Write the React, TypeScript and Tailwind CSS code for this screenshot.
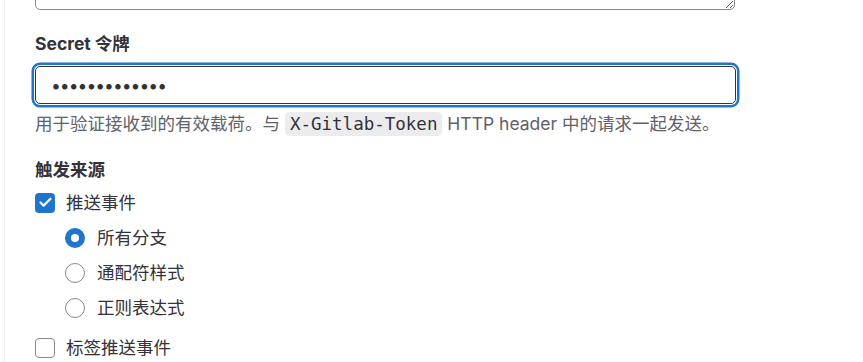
import { Check } from "lucide-react";

const sans = "font-['Inter','Noto_Sans_CJK_SC',sans-serif]";

export default function App() {
  return (
    <div className={`h-[362px] w-full overflow-hidden bg-white text-[17.5px] leading-[25px] text-[#333238] ${sans}`}>
      <div className="ml-[4px] h-full border-l border-[#ececef] pl-[30px]">
        <div className="w-[701px]">
          {/* tail of the description textarea above */}
          <div className="flex h-[10px] flex-col justify-end overflow-hidden">
            <textarea
              readOnly
              className="h-[60px] w-[700px] shrink-0 rounded-[5px] border border-[#89888d] bg-white outline-none"
            />
          </div>

          <label className="mt-[21px] block font-bold">Secret 令牌</label>
          <input
            type="password"
            readOnly
            defaultValue="abcdefghijklm"
            className="mt-[10px] block h-[38px] w-[701px] rounded-[5px] border border-[#333238] bg-white px-[15px] text-[17.5px] tracking-[-1px] text-[#333238] shadow-[0_0_0_1px_#fff,0_0_0_3.5px_#1f75cb] outline-none"
          />
          <p className="mt-[7px] text-[#626168]">
            用于验证接收到的有效载荷。与{" "}
            <code className="rounded-[5px] bg-[#ececef] px-[5px] py-[2px] font-['DejaVu_Sans_Mono',monospace] text-[17.5px] text-[#333238]">
              X-Gitlab-Token
            </code>{" "}
            HTTP header 中的请求一起发送。
          </p>

          <div className="mt-[20px] font-bold">触发来源</div>
          <div className="mt-[8px] flex flex-col">
            <CheckRow checked label="推送事件" />
            <div className="mt-[10px] flex flex-col gap-[10px] pl-[30px]">
              <RadioRow checked label="所有分支" />
              <RadioRow label="通配符样式" />
              <RadioRow label="正则表达式" />
            </div>
            <div className="mt-[15px]">
              <CheckRow label="标签推送事件" />
            </div>
          </div>
        </div>
      </div>
    </div>
  );
}

function CheckRow({ checked, label }: { checked?: boolean; label: string }) {
  return (
    <div className="flex h-[25px] items-center gap-[11px]">
      {checked ? (
        <span className="flex h-[20px] w-[20px] items-center justify-center rounded-[4px] bg-[#1f75cb]">
          <Check className="h-[15px] w-[15px] text-white" strokeWidth={3.5} />
        </span>
      ) : (
        <span className="h-[20px] w-[20px] rounded-[4px] border border-[#89888d] bg-white" />
      )}
      <span>{label}</span>
    </div>
  );
}

function RadioRow({ checked, label }: { checked?: boolean; label: string }) {
  return (
    <div className="flex h-[25px] items-center gap-[12px]">
      {checked ? (
        <span className="flex h-[20px] w-[20px] items-center justify-center rounded-full bg-[#1f75cb]">
          <span className="h-[8px] w-[8px] rounded-full bg-white" />
        </span>
      ) : (
        <span className="h-[20px] w-[20px] rounded-full border border-[#89888d] bg-white" />
      )}
      <span>{label}</span>
    </div>
  );
}
